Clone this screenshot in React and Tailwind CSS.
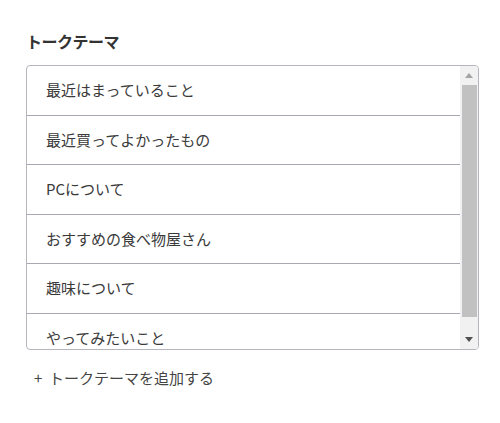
// Talk theme list with fake scrollbar
const themes = [
  '最近はまっていること',
  '最近買ってよかったもの',
  'PCについて',
  'おすすめの食べ物屋さん',
  '趣味について',
  'やってみたいこと',
]

export default function App() {
  return (
    <div className="w-[500px] h-[423px] bg-white pl-[26px] pt-[29px] font-['Noto_Sans_CJK_JP',sans-serif] text-[#333]">
      <h3 className="text-[16px] font-bold leading-[24px] tracking-[-0.5px]">トークテーマ</h3>

      <div className="mt-[12px] w-[453px] h-[285px] border border-[#b5b5bd] rounded-[4px] flex overflow-hidden">
        <ul className="flex-1 overflow-hidden">
          {themes.map((t) => (
            <li key={t} className="h-[49.6px] border-b border-[#a9a9b3] flex items-center pl-[19px] text-[15px] text-[#3a3a3a]">
              {t}
            </li>
          ))}
        </ul>
        {/* scrollbar */}
        <div className="w-[18px] bg-[#f1f1f1] flex flex-col items-center">
          <div className="h-[19px] w-full flex items-center justify-center">
            <svg width="8" height="5" viewBox="0 0 8 5"><path d="M4 0 L8 5 L0 5 Z" fill="#a3a3a3" /></svg>
          </div>
          <div className="w-[15px] h-[232px] bg-[#c1c1c1]" />
          <div className="flex-1" />
          <div className="h-[19px] w-full flex items-center justify-center">
            <svg width="8" height="5" viewBox="0 0 8 5"><path d="M0 0 L8 0 L4 5 Z" fill="#505050" /></svg>
          </div>
        </div>
      </div>

      <div className="mt-[16px] ml-[8px] text-[15px] text-[#444] leading-[24px] whitespace-pre">
        {'+  トークテーマを追加する'}
      </div>
    </div>
  )
}
